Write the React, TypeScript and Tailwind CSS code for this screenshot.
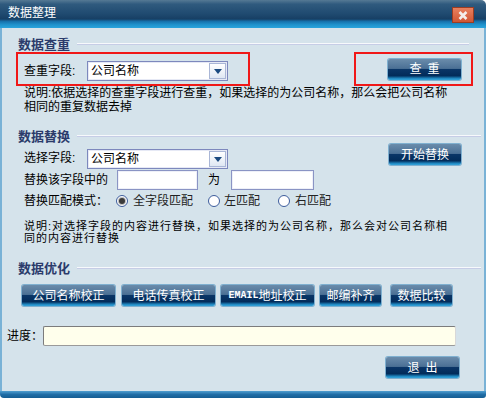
import React from "react";

const FONT = { fontFamily: '"Liberation Sans", "Noto Sans CJK SC", sans-serif' };

function BlueButton({ children, className = "" }: { children: React.ReactNode; className?: string }) {
  return (
    <div
      className={
        "flex items-center justify-center rounded-[2px] text-white text-[12px] leading-none bg-[linear-gradient(to_bottom,#6a8cab_0%,#4b7095_45%,#0a3566_50%,#022c5a_80%,#1f86bf_92%,#36a6dc_100%)] shadow-[0_0_0_1px_#7fb0d0] " +
        className
      }
    >
      {children}
    </div>
  );
}

function Select({ value, className = "" }: { value: string; className?: string }) {
  return (
    <div
      className={
        "relative flex items-center h-[20px] w-[141px] border border-[#7d88bd] bg-white shadow-[inset_0_0_0_1px_#e6e9f5] " +
        className
      }
    >
      <span className="pl-[3px] text-[12px] text-black leading-none">{value}</span>
      <div className="absolute right-[1px] top-[1px] w-[17px] h-[16px] border border-[#a9b6d6] bg-[linear-gradient(to_bottom,#ffffff,#dfe7f3)] flex items-center justify-center">
        <svg width="8" height="5" viewBox="0 0 8 5">
          <polygon points="0,0 8,0 4,5" fill="#1b4a80" />
        </svg>
      </div>
    </div>
  );
}

function Input({ className = "" }: { className?: string }) {
  return <div className={"h-[20px] border border-[#8a94c4] bg-white shadow-[inset_0_0_0_1px_#eef0f8] " + className} />;
}

function Radio({ checked }: { checked?: boolean }) {
  return (
    <div className="w-[12px] h-[12px] rounded-full border border-[#3c5c9c] bg-white flex items-center justify-center">
      {checked && (
        <div className="w-[6px] h-[6px] rounded-full bg-[#3a3a3a] shadow-[0_0_0_1px_#bfbfbf]" />
      )}
    </div>
  );
}

function SectionHeader({ title, lineRight }: { title: string; lineRight: string }) {
  return (
    <div className="flex items-center h-[16px]">
      <span className="ml-[16px] text-[13px] font-bold text-[#2b3b6b] leading-none whitespace-nowrap">{title}</span>
      <div className={"ml-[7px] flex-1 h-[2px] bg-[linear-gradient(to_bottom,#f7f9fc_50%,#c6cde6_50%)] " + lineRight} />
    </div>
  );
}

export default function App() {
  return (
    <div className="w-[486px] h-[398px] flex flex-col bg-white overflow-hidden" style={FONT}>
      {/* Title bar */}
      <div className="h-[28px] flex items-center relative rounded-tr-[5px] bg-[linear-gradient(to_bottom,#557994_0%,#2f5a7e_15%,#1f4a70_50%,#173f64_68%,#1670aa_76%,#1f92cc_88%,#2aa4dc_100%)]">
        <span className="ml-[8px] -mt-[3px] text-white text-[12px] leading-none">数据整理</span>
        <div className="absolute left-[452px] top-[7px] w-[22px] h-[16px] border border-[#9c3d22] bg-[linear-gradient(to_bottom,#e8805e,#cf5634)] flex items-center justify-center">
          <svg width="10" height="9" viewBox="0 0 10 9">
            <path d="M1.5 1 L8.5 8 M8.5 1 L1.5 8" stroke="#f4eeea" strokeWidth="2.6" />
          </svg>
        </div>
      </div>

      {/* Body */}
      <div className="flex-1 flex flex-col bg-[#d5e3eb] border-l-2 border-l-[#79b2d6] border-r-[2px] border-r-[#79b2d6] text-black">
        <div className="mt-[8px]">
          <SectionHeader title="数据查重" lineRight="mr-[15px]" />
        </div>

        {/* red boxes row */}
        <div className="flex h-[34px]">
          <div className="ml-[14px] w-[234px] h-[34px] border-2 border-[#f01818] flex items-center pt-[4px]">
            <span className="ml-[6px] w-[63px] text-[12px] leading-none whitespace-nowrap">查重字段:</span>
            <Select value="公司名称" />
          </div>
          <div className="ml-[104px] w-[119px] h-[34px] border-2 border-[#f01818] flex items-center">
            <BlueButton className="ml-[32px] w-[73px] h-[21px] tracking-[6px] pl-[6px]">查重</BlueButton>
          </div>
        </div>

        <div className="ml-[22px] text-[12px] leading-[14px] whitespace-nowrap">
          说明:依据选择的查重字段进行查重，如果选择的为公司名称，那么会把公司名称
          <br />
          相同的重复数据去掉
        </div>

        <div className="mt-[14px]">
          <SectionHeader title="数据替换" lineRight="mr-[3px]" />
        </div>

        {/* row 1 */}
        <div className="flex h-[25px] items-start">
          <span className="ml-[22px] mt-[8px] w-[63px] text-[12px] leading-none whitespace-nowrap">选择字段:</span>
          <Select value="公司名称" className="mt-[5px]" />
          <BlueButton className="ml-[161px] w-[72px] h-[21px]">开始替换</BlueButton>
        </div>

        {/* row 2 */}
        <div className="flex h-[21px] items-center">
          <span className="ml-[22px] w-[93px] text-[12px] leading-none whitespace-nowrap">替换该字段中的</span>
          <Input className="w-[81px]" />
          <span className="ml-[10px] w-[23px] text-[12px] leading-none">为</span>
          <Input className="w-[83px]" />
        </div>

        {/* row 3 */}
        <div className="flex h-[22px] items-center text-[12px] leading-none">
          <span className="ml-[22px] w-[92px] whitespace-nowrap">替换匹配模式：</span>
          <Radio checked />
          <span className="ml-[5px] w-[75px] whitespace-nowrap text-[#222]">全字段匹配</span>
          <Radio />
          <span className="ml-[4px] w-[54px] whitespace-nowrap text-[#222]">左匹配</span>
          <Radio />
          <span className="ml-[5px] whitespace-nowrap text-[#222]">右匹配</span>
        </div>

        <div className="mt-[8px] ml-[22px] text-[11px] tracking-[1px] leading-[12px] whitespace-nowrap">
          说明:对选择字段的内容进行替换，如果选择的为公司名称，那么会对公司名称相
          <br />
          同的内容进行替换
        </div>

        <div className="mt-[16px]">
          <SectionHeader title="数据优化" lineRight="mr-[3px]" />
        </div>

        <div className="flex mt-[9px] h-[21px]">
          <BlueButton className="ml-[20px] w-[93px] h-[21px]">公司名称校正</BlueButton>
          <BlueButton className="ml-[7px] w-[93px] h-[21px]">电话传真校正</BlueButton>
          <BlueButton className="ml-[6px] w-[93px] h-[21px]">
            <span className="font-bold text-[10px]" style={{ fontFamily: '"Liberation Mono", monospace' }}>
              EMAIL
            </span>
            <span>地址校正</span>
          </BlueButton>
          <BlueButton className="ml-[6px] w-[61px] h-[21px]">邮编补齐</BlueButton>
          <BlueButton className="ml-[10px] w-[61px] h-[21px]">数据比较</BlueButton>
        </div>

        <div className="flex items-center mt-[20px] h-[20px]">
          <span className="ml-[5px] w-[36px] text-[12px] leading-none whitespace-nowrap">进度：</span>
          <div className="w-[413px] h-[20px] border border-[#7c7c7c] border-r-[#d8d8d8] border-b-[#9a9a9a] rounded-[2px] bg-[#ffffec]" />
        </div>

        <div className="flex mt-[11px]">
          <BlueButton className="ml-[384px] w-[73px] h-[21px] tracking-[6px] pl-[6px]">退出</BlueButton>
        </div>
      </div>

      {/* Bottom bar */}
      <div className="h-[7px] rounded-bl-[4px] rounded-br-[3px] bg-[linear-gradient(to_bottom,#4f9ed0,#1f6da6_50%,#155d92)]" />
    </div>
  );
}
